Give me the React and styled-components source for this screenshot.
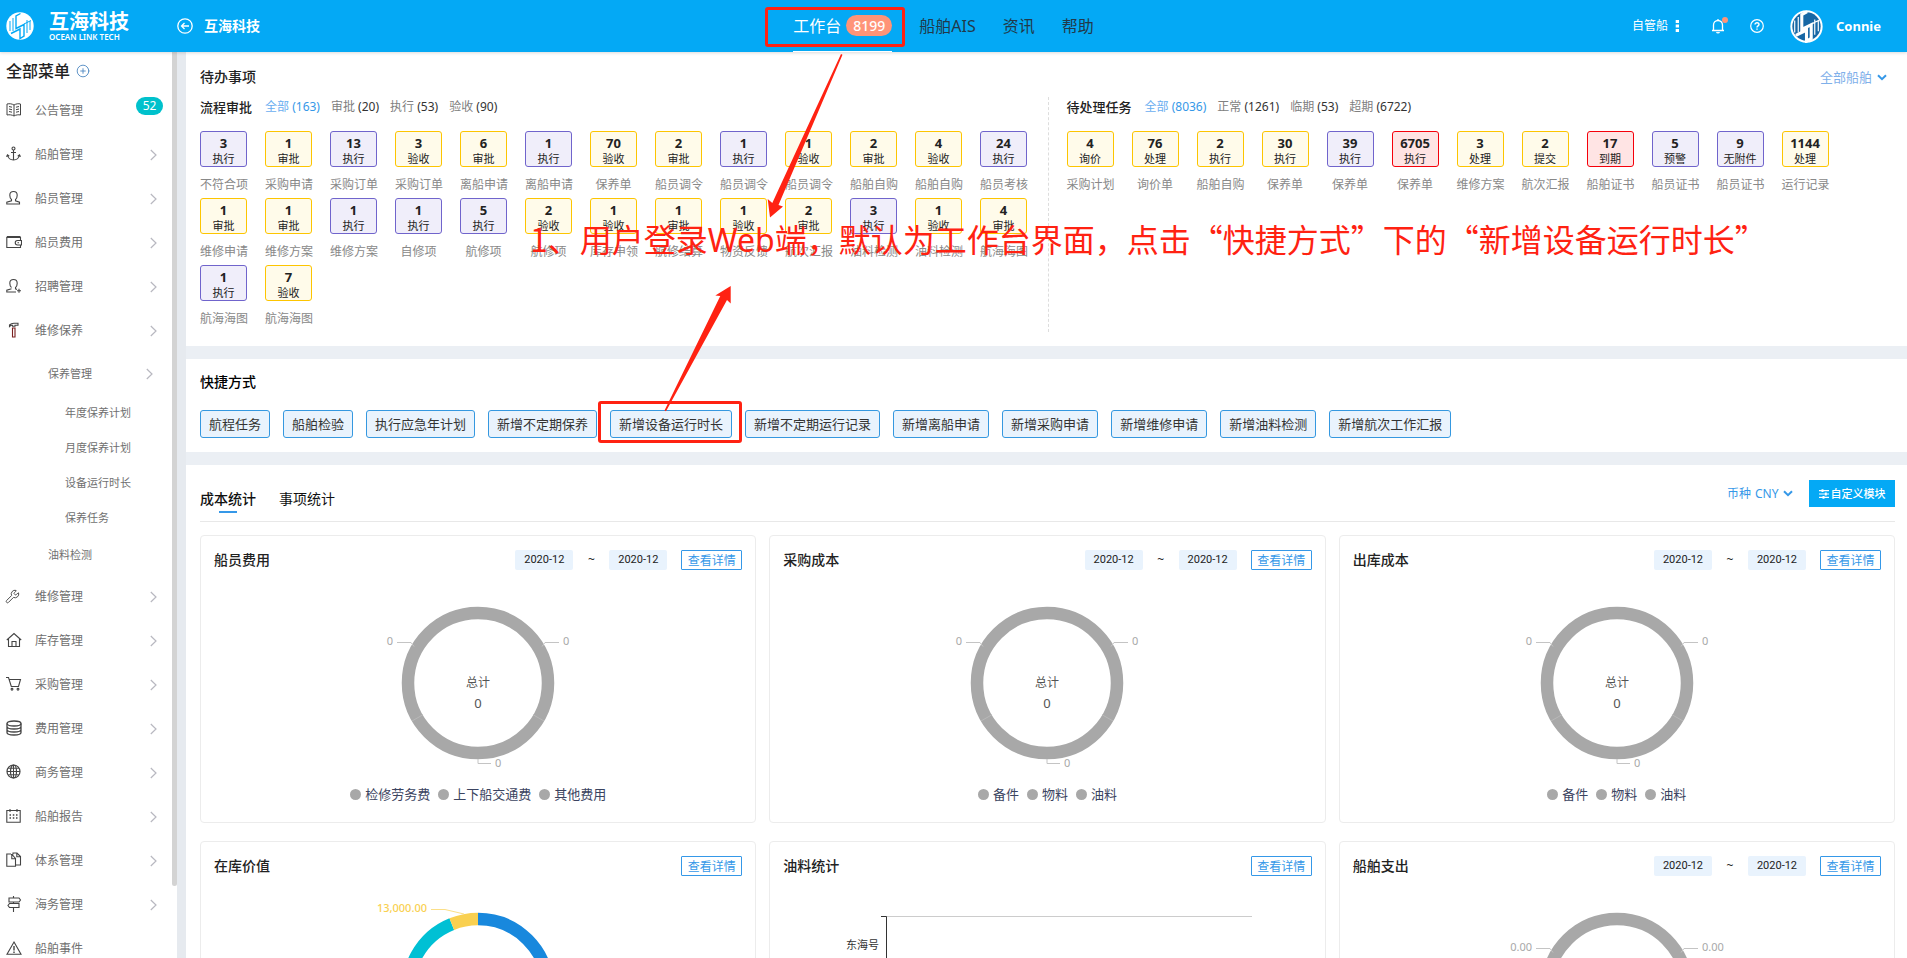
import React from "react";
import styled, { createGlobalStyle, css } from "styled-components";
import { CirclePlus, Globe, Wrench } from "lucide-react";

const GlobalStyle = createGlobalStyle`
  *, *::before, *::after { box-sizing: border-box; }
  body {
    margin: 0;
    overflow: hidden;
    background: #ebeff4;
    color: #222;
    font: 12px/20px "Noto Sans", "Noto Sans CJK SC", sans-serif;
  }
  button, input, select { font: inherit; color: inherit; margin: 0; }
  button { cursor: pointer; }
  a { color: inherit; text-decoration: none; }
  h1, h2, h3, p, ul { margin: 0; padding: 0; font-size: inherit; font-weight: inherit; }
  ul { list-style: none; }
`;

const RED = "#ff2212";

/* ---------- shell ---------- */

const Shell = styled.div`
  position: relative;
  display: flex;
  flex-direction: column;
  height: 100vh;
  overflow: hidden;
`;

const Body = styled.div`
  display: flex;
  flex: 1;
  min-height: 0;
`;

/* ---------- header ---------- */

const Header = styled.header`
  position: relative;
  z-index: 1;
  display: flex;
  flex: none;
  height: 52px;
  background: #04a9f5;
  color: #fff;
  box-shadow: 0 1px 3px rgba(0, 0, 0, 0.15);
`;

const HeaderSide = styled.div`
  display: flex;
  flex: 1;
  align-items: center;
  justify-content: ${(p) => (p.$end ? "flex-end" : "flex-start")};
  padding: ${(p) => (p.$end ? "0 26px 0 0" : "0 0 0 6px")};
`;

const Brand = styled.a`
  display: flex;
  align-items: center;
  gap: 15px;
  width: 171px;
`;

const BrandText = styled.span`
  display: flex;
  flex-direction: column;
`;

const BrandName = styled.strong`
  font-size: 20px;
  line-height: 22px;
`;

const BrandTag = styled.span`
  font-size: 8px;
  line-height: 8px;
  font-weight: 600;
  white-space: nowrap;
`;

const Company = styled.a`
  display: flex;
  align-items: center;
  gap: 11px;
  font-size: 14px;
  font-weight: 700;
`;

const Nav = styled.nav`
  display: flex;
  gap: 27px;
  font-size: 16px;
`;

const NavLink = styled.a`
  position: relative;
  display: flex;
  align-items: center;
  gap: 5px;
  color: ${(p) => (p.$active ? "#fff" : "#21394a")};
  border-bottom: 1px solid ${(p) => (p.$active ? "#fff" : "transparent")};
`;

const NavCount = styled.span`
  height: 21px;
  padding: 0 7px;
  border-radius: 11px;
  background: #ff9478;
  font-size: 14px;
  line-height: 21px;
  font-weight: 500;
`;

const Highlight = styled.span`
  position: absolute;
  inset: ${(p) => p.$inset};
  border: 3px solid ${RED};
  border-radius: 3px;
  pointer-events: none;
`;

const FleetButton = styled.button`
  display: flex;
  align-items: center;
  gap: 7px;
  padding: 0;
  border: 0;
  background: none;
  color: #fff;
`;

const IconButton = styled.button`
  display: flex;
  padding: 0;
  margin-left: ${(p) => p.$space}px;
  border: 0;
  background: none;
  color: #fff;
`;

const UserLink = styled.a`
  display: flex;
  align-items: center;
  gap: 13px;
  margin-left: 26px;
  font-size: 13px;
  font-weight: 700;
`;

/* ---------- sidebar ---------- */

const Sidebar = styled.aside`
  display: flex;
  flex: none;
  width: 186px;
  background: #e6eaef;
`;

const MenuPane = styled.div`
  flex: 1;
  padding-top: 9px;
  overflow: hidden;
  background: #fff;
`;

const MenuTitle = styled.h2`
  display: flex;
  align-items: center;
  gap: 6px;
  height: 20px;
  margin-bottom: 8px;
  padding-left: 6px;
  font-size: 16px;
  font-weight: 500;
  color: #222;
`;

const ScrollTrack = styled.div`
  width: 5px;
  margin-right: 9px;
  background: #fff;
`;

const ScrollThumb = styled.div`
  height: 92%;
  border-radius: 0 0 3px 3px;
  background: #d3d3d3;
`;

const menuLevels = {
  top: css`height: 44px; padding-left: 6px; font-size: 12px;`,
  sub: css`height: 42px; padding-left: 48px; padding-right: 19px; font-size: 11px;`,
  leaf: css`height: 35px; padding-left: 65px; font-size: 11px;`,
  last: css`height: 40px; padding-left: 48px; font-size: 11px;`,
};

const MenuLink = styled.a`
  display: flex;
  align-items: center;
  padding-right: 15px;
  color: #707070;
  ${(p) => menuLevels[p.$level]}
`;

const MenuIcon = styled.span`
  display: flex;
  width: 29px;
  padding-bottom: 2px;
  color: #444;
`;

const MenuLabel = styled.span`
  flex: 1;
`;

const MenuBadge = styled.span`
  align-self: flex-start;
  width: 27px;
  height: 18px;
  margin: 8px -6px 0 0;
  border-radius: 9px;
  background: #00c1cc;
  color: #fff;
  line-height: 18px;
  text-align: center;
`;

/* ---------- main ---------- */

const Main = styled.main`
  display: flex;
  flex: 1;
  flex-direction: column;
  gap: 13px;
  min-width: 0;
`;

const Panel = styled.section`
  flex: none;
  padding: ${(p) => p.$pad};
  background: #fff;
`;

const PanelHead = styled.div`
  display: flex;
  align-items: center;
  justify-content: space-between;
  padding-right: 8px;
`;

const Heading = styled.h2`
  font-size: 14px;
  font-weight: 500;
  color: ${(p) => (p.$dark ? "#000" : "#222")};
`;

const SelectWrap = styled.label`
  display: flex;
  align-items: center;
  gap: 4px;
  color: ${(p) => p.$color};
  font-size: ${(p) => p.$size}px;

  svg { color: #3598e8; }
`;

const Select = styled.select`
  appearance: none;
  padding: 0;
  border: 0;
  background: none;
`;

const TodoColumns = styled.div`
  display: grid;
  grid-template-columns: 1fr 1fr;
  margin-top: 10px;
`;

const TodoColumn = styled.div`
  min-height: 234px;
  padding-left: ${(p) => (p.$second ? 18 : 0)}px;
  border-left: ${(p) => (p.$second ? "1px dashed #ddd" : "0")};
`;

const FilterRow = styled.div`
  display: flex;
  align-items: center;
  gap: 11px;
  margin-bottom: 14px;
`;

const FilterTitle = styled.h3`
  margin-right: 2px;
  font-size: 13px;
  font-weight: 500;
`;

const Filter = styled.button`
  padding: 0;
  border: 0;
  background: none;
  color: ${(p) => (p.$active ? "#6aaef0" : "#808080")};

  span { color: ${(p) => (p.$active ? "#3598e8" : "#333")}; }
`;

const TaskGrid = styled.ul`
  display: grid;
  grid-template-columns: repeat(auto-fill, 47px);
  column-gap: 18px;
`;

const TaskItem = styled.li`
  height: 67px;
  text-align: center;
  white-space: nowrap;
  color: #888;
`;

const tones = {
  y: ["#fdc500", "#fffbea"],
  p: ["#7064cc", "#f0eefa"],
  r: ["#f5000a", "#ffe4e4"],
};

const TaskBox = styled.button`
  display: block;
  width: 47px;
  height: 36px;
  margin-bottom: 8px;
  padding: 3px 0 0;
  border: 1px solid ${(p) => tones[p.$tone][0]};
  border-radius: 3px;
  background: ${(p) => tones[p.$tone][1]};
  color: #222;
  font-size: 11px;
  line-height: 15px;

  strong {
    display: block;
    font-size: 13px;
    line-height: 16px;
  }
`;

const ShortcutRow = styled.div`
  display: flex;
  flex-wrap: wrap;
  gap: 13px;
  margin-top: 18px;
`;

const Shortcut = styled.button`
  position: relative;
  height: 28px;
  padding: 0 8px;
  border: 1px solid #3598e0;
  border-radius: 3px;
  background: #e9f3fd;
  color: #333;
  font-size: 13px;
  line-height: 26px;
`;

const StatsHead = styled.div`
  display: flex;
  align-items: center;
  justify-content: space-between;
  height: 42px;
  margin-bottom: 13px;
  border-bottom: 1px solid #e8e8e8;
`;

const Tabs = styled.div`
  display: flex;
  gap: 23px;
`;

const Tab = styled.button`
  display: flex;
  flex-direction: column;
  align-items: center;
  padding: 0;
  border: 0;
  background: none;
  color: #111;
  font-size: 14px;
  font-weight: ${(p) => (p.$active ? 500 : 400)};

  &::after {
    width: 18px;
    height: 2px;
    margin-top: 2px;
    background: ${(p) => (p.$active ? "#3598e8" : "transparent")};
    content: "";
  }
`;

const StatsTools = styled.div`
  display: flex;
  align-items: center;
  gap: 16px;
  padding-bottom: 14px;
`;

const CustomizeButton = styled.button`
  display: flex;
  align-items: center;
  justify-content: center;
  gap: 2px;
  width: 86px;
  height: 27px;
  padding: 0;
  border: 0;
  background: #04a9f5;
  color: #fff;
  font-size: 11px;
  font-weight: 500;
`;

const CardGrid = styled.div`
  display: grid;
  grid-template-columns: repeat(3, 1fr);
  gap: 18px 13px;
`;

const Card = styled.article`
  height: 288px;
  padding: 14px 13px 0;
  border: 1px solid #ececec;
  border-radius: 4px;
`;

const CardHead = styled.div`
  display: flex;
  align-items: center;
  height: 20px;
  margin-bottom: 30px;

  h3 { flex: 1; font-size: 14px; font-weight: 500; }
`;

const DateInput = styled.input`
  width: 58px;
  height: 20px;
  padding: 0;
  border: 0;
  border-radius: 2px;
  background: #e9f3fd;
  color: #222;
  font: 11px/20px Roboto, "Noto Sans", sans-serif;
  text-align: center;
`;

const Tilde = styled.span`
  width: 36px;
  text-align: center;
`;

const DetailLink = styled.a`
  width: 61px;
  height: 20px;
  margin-left: 14px;
  border: 1px solid #3598e8;
  border-radius: 1px;
  color: #3598e8;
  line-height: 20px;
  text-align: center;
`;

const Chart = styled.svg`
  display: block;
  margin: 0 auto;
  overflow: visible;
  font-size: 11px;
`;

const Legend = styled.ul`
  display: flex;
  justify-content: center;
  gap: 8px;
  margin-top: 14px;
  color: #3b4460;
  font-size: 13px;

  li { display: flex; align-items: center; gap: 4px; }
  li::before {
    width: 11px;
    height: 11px;
    border-radius: 50%;
    background: #a8a8a8;
    content: "";
  }
`;

/* ---------- annotation ---------- */

const Annotation = styled.div`
  position: absolute;
  inset: 0;
  z-index: 2;
  pointer-events: none;
`;

const Arrows = styled.svg`
  position: absolute;
  top: 0;
  left: 0;
`;

const Note = styled.p`
  position: absolute;
  top: 214px;
  left: 530px;
  color: ${RED};
  font: 32px/48px "Noto Sans CJK SC", sans-serif;
  white-space: nowrap;

  span { font-family: "Noto Sans", sans-serif; }
`;

/* ---------- drawings ---------- */

const Line = ({ children, width = 1.1 }) => (
  <svg width="16" height="16" viewBox="0 0 16 16" fill="none" stroke="currentColor" strokeWidth={width}>
    {children}
  </svg>
);

const icons = {
  book: (
    <Line width={1}>
      <path d="M8 3C6 1.8 3.5 1.4 1 2v11c2.5-.5 5-.2 7 1 2-1.200 4.500-1.500 6.500-1V2C12.500 1.400 10 1.800 8 3zM8 3v11" />
      <path d="M3 4.500l3 .7M3 7l3 .7M3 9.500l3 .7M13 4.500l-3 .7M13 7l-3 .7M13 9.500l-3 .7" />
    </Line>
  ),
  anchor: (
    <Line>
      <circle cx="7.500" cy="2.500" r="1.500" />
      <path d="M7.500 4v10M5 6.500h5M1.500 9c.6 3 3 5 6 5s5.400-2 6-5M.5 10.800l1-2 1.800 1.300M14.500 10.800l-1-2-1.800 1.300" />
    </Line>
  ),
  user: (
    <Line>
      <path d="M5.500 9.500C4.300 8.500 3.800 7 3.800 5.200 3.800 2.900 5.200 1.500 7.500 1.500s3.700 1.400 3.700 3.700c0 1.800-.5 3.300-1.700 4.300v1.300l4 1.400v1.800H.8v-1.800l4.700-1.400z" />
    </Line>
  ),
  wallet: (
    <Line>
      <path d="M.8 3.500h13.700v10H.8z" />
      <path d="M.8 3h13.700" strokeWidth="2" />
      <path d="M15.500 6.500h-4a2 2 0 0 0 0 4.500h4z" fill="#fff" />
      <path d="M11.500 8.800h1.500" />
    </Line>
  ),
  recruit: (
    <Line>
      <path d="M5.500 9.500C4.300 8.500 3.800 7 3.800 5.200 3.800 2.900 5.200 1.500 7.500 1.500s3.700 1.400 3.700 3.700c0 1.800-.5 3.300-1.700 4.300v1.300l1.500.6M10 14H.8v-1.800l4.700-1.400M11 12.700h4M13 10.700v4" />
    </Line>
  ),
  hammer: (
    <Line>
      <path d="M3.500 4.500V3C5 1.500 6 1.300 8 1.300h4v2H9v1H6.500v-1C5.500 3 4.500 3.500 3.500 4.500z" />
      <path d="M6.500 6h2.500v9H6.500z" stroke="#7a2020" />
    </Line>
  ),
  wrench: <Wrench size={15} strokeWidth={1.5} transform="translate(-1 0)" />,
  home: (
    <Line>
      <path d="M.8 8L8 1.500 15.200 8M2.500 7v7.500h11V7M6 14.500V9.500h4v5" />
    </Line>
  ),
  cart: (
    <Line>
      <path d="M0 1.500h2.500l2.800 9h7.200l2-7H3.200" />
      <circle cx="6" cy="13.200" r=".9" />
      <circle cx="12" cy="13.200" r=".9" />
    </Line>
  ),
  coins: (
    <Line width={1.3}>
      <ellipse cx="8" cy="3.500" rx="7" ry="2.500" />
      <path d="M1 3.500v9C1 13.900 4.100 15 8 15s7-1.100 7-2.500v-9M1 6.500C1 7.900 4.100 9 8 9s7-1.100 7-2.500M1 9.500C1 10.900 4.100 12 8 12s7-1.100 7-2.500" />
    </Line>
  ),
  globe: (
    <Line width={1.2}>
      <circle cx="7.500" cy="7.500" r="6.500" />
      <ellipse cx="7.500" cy="7.500" rx="3" ry="6.500" />
      <path d="M7.500 1v13M1 7.500h13M2.200 4.200h10.600M2.200 10.800h10.600" strokeWidth="1" />
    </Line>
  ),
  calendar: (
    <Line>
      <path d="M.8 2.500h13.400v11.700H.8zM4 1v3M11 1v3" />
      <path d="M3.500 7h1.500M6.800 7h1.500M10 7h1.500M3.500 10h1.500M6.800 10h1.500M10 10h1.500" strokeWidth="1.500" />
    </Line>
  ),
  docs: (
    <Line>
      <path d="M5 2H.8v12.200h8.700V6.500L6 2.500H5M5.800 2.500v4.200h3.700M7 2.500V1h4l3.500 3.500v8.500H9.500M10.800 1v3.700h3.700" />
    </Line>
  ),
  sign: (
    <Line>
      <path d="M7.500 0v2M7.500 6v1.500M7.500 11.500V16M3 2h10l1.500 2L13 6H3zM13 7.500H3.500L2 9.500l1.500 2H13z" />
    </Line>
  ),
  alert: (
    <Line>
      <path d="M8 2L15 14.200H1z" />
      <path d="M8 6v4.500M8 11.500V13" strokeWidth="1.400" />
    </Line>
  ),
};

const MenuArrow = () => (
  <svg width="7" height="12" viewBox="0 0 7 12" fill="none" stroke="#b8b8c0" strokeWidth="1.200">
    <path d="M.8 1L6 6 .8 11" />
  </svg>
);

const DownArrow = () => (
  <svg width="10" height="7" viewBox="0 0 10 7" fill="none" stroke="currentColor" strokeWidth="2">
    <path d="M1 1.200l4 4 4-4" />
  </svg>
);

const LogoMark = ({ size, disc, ink, rim }) => (
  <svg width={size} height={size} viewBox="0 0 28 28">
    <circle cx="14" cy="14" r="13.700" fill={disc} />
    {rim && <circle cx="14" cy="14" r="12" fill={rim} />}
    <path d="M14.500 1.500L10 4v12.500l8-4V24l-4 2.500V17l-9 4.500" fill="none" stroke={ink} strokeWidth={rim ? 2.6 : 1.4} />
    <path d="M7 6v13M4 9v10M21 8v13M24 9v9M18 12l7-3.500" fill="none" stroke={ink} strokeWidth="1" />
  </svg>
);

const BackIcon = () => (
  <svg width="16" height="16" viewBox="0 0 16 16" fill="none" stroke="#fff" strokeWidth="1.300">
    <circle cx="8" cy="8" r="7.200" />
    <path d="M12 8H4.500M7.500 5l-3 3 3 3" />
  </svg>
);

const BellIcon = () => (
  <svg width="18" height="18" viewBox="0 0 18 18" fill="none" stroke="#fff" strokeWidth="1.300">
    <path d="M2 13.500h12M3.500 13.500V8a4.500 4.500 0 0 1 9 0v5.500M8 3.500V2M6.500 15.200c.6 1 2.400 1 3 0" />
    <circle cx="15" cy="3" r="3" fill="#ff9478" stroke="none" />
  </svg>
);

const HelpIcon = () => (
  <svg width="14" height="14" viewBox="0 0 14 14" fill="none" stroke="#fff" strokeWidth="1.200">
    <circle cx="7" cy="7" r="6.300" />
    <path d="M5 5.600c0-2.600 4-2.400 4-.1 0 1.300-2 1.500-2 3M7 9.600v1.200" strokeWidth="1.400" />
  </svg>
);

const DotsIcon = () => (
  <svg width="5" height="14" viewBox="0 0 5 14" fill="#fff">
    <path d="M.7 1h3.300v3H.7zM.7 5.500h3.300v3H.7zM.7 10h3.300v3H.7z" />
  </svg>
);

const SlidersIcon = () => (
  <svg width="10" height="10" viewBox="0 0 10 10" stroke="#fff" strokeWidth="1.200">
    <path d="M0 1.700h10M0 5h10M0 8.300h10" />
    <path d="M3.500.3v2.800M6.800 3.600v2.800M4.500 6.900v2.800" strokeWidth="2" />
  </svg>
);

const EmptyDonut = ({ value, total }) => (
  <Chart width="220" height="170" viewBox="0 0 220 170">
    <circle cx="110" cy="83" r="70" fill="none" stroke="#a8a8a8" strokeWidth="12.500" />
    <path d="M44 121l11-6.300M176 121l-11-6.300" stroke="#b8b8b8" />
    <path d="M29 42.500h14l3 4M191 42.500h-14l-3 4M110 159v4.500h13" fill="none" stroke="#c4c4c4" />
    <g fill="#a8a8a8">
      <text x="25" y="45" textAnchor="end">{value}</text>
      <text x="195" y="45">{value}</text>
      <text x="127" y="167">{value}</text>
    </g>
    <g fill="#555" textAnchor="middle">
      <text x="110" y="87" fontSize="12">总计</text>
      <text x="110" y="108" fontSize="13">{total}</text>
    </g>
  </Chart>
);

const StockDonut = () => (
  <Chart width="220" height="170" viewBox="0 0 220 170" fill="none">
    <g strokeWidth="12.500">
      <path d="M110 13a70 70 0 0 1 0 140" stroke="#1888dd" />
      <path d="M110 153A70 70 0 0 1 83.800 18.100" stroke="#00c0d4" />
      <path d="M83.800 18.100A70 70 0 0 1 110 13" stroke="#f9d050" />
    </g>
    <path d="M63 3.500h14l19 4.500" stroke="#fbdf88" />
    <text x="59" y="6" textAnchor="end" fill="#f9d050" fontWeight="500">13,000.00</text>
  </Chart>
);

const FuelChart = () => (
  <Chart width="420" height="170" viewBox="0 0 420 170" fill="none">
    <path d="M49 10.500h366" stroke="#ccc" />
    <path d="M44 10.500h5.500V170" stroke="#333" />
    <text x="42" y="43" textAnchor="end" fill="#333">东海号</text>
  </Chart>
);

/* ---------- data ---------- */

const menu = [
  ["book", "公告管理", "52"],
  ["anchor", "船舶管理"],
  ["user", "船员管理"],
  ["wallet", "船员费用"],
  ["recruit", "招聘管理"],
  ["hammer", "维修保养"],
  ["wrench", "维修管理"],
  ["home", "库存管理"],
  ["cart", "采购管理"],
  ["coins", "费用管理"],
  ["globe", "商务管理"],
  ["calendar", "船舶报告"],
  ["docs", "体系管理"],
  ["sign", "海务管理"],
  ["alert", "船舶事件"],
];

const leaves = ["年度保养计划", "月度保养计划", "设备运行时长", "保养任务"];

const approvals = [
  [3, "执行", "不符合项", "p"], [1, "审批", "采购申请", "y"], [13, "执行", "采购订单", "p"],
  [3, "验收", "采购订单", "y"], [6, "审批", "离船申请", "y"], [1, "执行", "离船申请", "p"],
  [70, "验收", "保养单", "y"], [2, "审批", "船员调令", "y"], [1, "执行", "船员调令", "p"],
  [1, "验收", "船员调令", "y"], [2, "审批", "船舶自购", "y"], [4, "验收", "船舶自购", "y"],
  [24, "执行", "船员考核", "p"], [1, "审批", "维修申请", "y"], [1, "审批", "维修方案", "y"],
  [1, "执行", "维修方案", "p"], [1, "执行", "自修项", "p"], [5, "执行", "航修项", "p"],
  [2, "验收", "航修项", "y"], [1, "验收", "库存申领", "y"], [1, "审批", "航修结算", "y"],
  [1, "验收", "物资反馈", "y"], [2, "审批", "航次汇报", "y"], [3, "执行", "油料检测", "p"],
  [1, "验收", "油料检测", "y"], [4, "审批", "航海海图", "y"], [1, "执行", "航海海图", "p"],
  [7, "验收", "航海海图", "y"],
];

const pending = [
  [4, "询价", "采购计划", "y"], [76, "处理", "询价单", "y"], [2, "执行", "船舶自购", "y"],
  [30, "执行", "保养单", "y"], [39, "执行", "保养单", "p"], [6705, "执行", "保养单", "r"],
  [3, "处理", "维修方案", "y"], [2, "提交", "航次汇报", "y"], [17, "到期", "船舶证书", "r"],
  [5, "预警", "船员证书", "p"], [9, "无附件", "船员证书", "p"], [1144, "处理", "运行记录", "y"],
];

const shortcuts = [
  "航程任务", "船舶检验", "执行应急年计划", "新增不定期保养", "新增设备运行时长", "新增不定期运行记录",
  "新增离船申请", "新增采购申请", "新增维修申请", "新增油料检测", "新增航次工作汇报",
];

const supplies = ["备件", "物料", "油料"];

const cards = [
  { title: "船员费用", dates: true, chart: <EmptyDonut value="0" total="0" />, legend: ["检修劳务费", "上下船交通费", "其他费用"] },
  { title: "采购成本", dates: true, chart: <EmptyDonut value="0" total="0" />, legend: supplies },
  { title: "出库成本", dates: true, chart: <EmptyDonut value="0" total="0" />, legend: supplies },
  { title: "在库价值", chart: <StockDonut /> },
  { title: "油料统计", chart: <FuelChart /> },
  { title: "船舶支出", dates: true, chart: <EmptyDonut value="0.00" /> },
];

/* ---------- parts ---------- */

function TaskColumn({ title, filters, tasks, second }) {
  return (
    <TodoColumn $second={second}>
      <FilterRow>
        <FilterTitle>{title}</FilterTitle>
        {filters.map(([name, count], i) => (
          <Filter key={name} $active={i === 0}>
            {name} <span>({count})</span>
          </Filter>
        ))}
      </FilterRow>
      <TaskGrid>
        {tasks.map(([count, action, name, tone], i) => (
          <TaskItem key={i}>
            <TaskBox $tone={tone}>
              <strong>{count}</strong>
              {action}
            </TaskBox>
            {name}
          </TaskItem>
        ))}
      </TaskGrid>
    </TodoColumn>
  );
}

function MenuSection() {
  return (
    <nav>
      {menu.map(([icon, label, badge]) => (
        <React.Fragment key={label}>
          <MenuLink href="#" $level="top">
            <MenuIcon>{icons[icon]}</MenuIcon>
            <MenuLabel>{label}</MenuLabel>
            {badge ? <MenuBadge>{badge}</MenuBadge> : icon !== "alert" && <MenuArrow />}
          </MenuLink>
          {icon === "hammer" && (
            <>
              <MenuLink href="#" $level="sub">
                <MenuLabel>保养管理</MenuLabel>
                <MenuArrow />
              </MenuLink>
              {leaves.map((leaf) => (
                <MenuLink key={leaf} href="#" $level="leaf">{leaf}</MenuLink>
              ))}
              <MenuLink href="#" $level="last">油料检测</MenuLink>
            </>
          )}
        </React.Fragment>
      ))}
    </nav>
  );
}

export default function App() {
  return (
    <Shell>
      <GlobalStyle />
      <Header>
        <HeaderSide>
          <Brand href="#">
            <LogoMark size={28} disc="#fff" ink="#04a9f5" />
            <BrandText>
              <BrandName>互海科技</BrandName>
              <BrandTag>OCEAN LINK TECH</BrandTag>
            </BrandText>
          </Brand>
          <Company href="#">
            <BackIcon />
            互海科技
          </Company>
        </HeaderSide>
        <Nav>
          <NavLink href="#" $active>
            工作台
            <NavCount>8199</NavCount>
            <Highlight $inset="7px -13px 4px -28px" />
          </NavLink>
          <NavLink href="#">船舶AIS</NavLink>
          <NavLink href="#">资讯</NavLink>
          <NavLink href="#">帮助</NavLink>
        </Nav>
        <HeaderSide $end>
          <FleetButton>
            自管船
            <DotsIcon />
          </FleetButton>
          <IconButton $space={30} aria-label="通知">
            <BellIcon />
          </IconButton>
          <IconButton $space={22} aria-label="帮助">
            <HelpIcon />
          </IconButton>
          <UserLink href="#">
            <LogoMark size={33} disc="#fff" rim="#1767a5" ink="#fff" />
            Connie
          </UserLink>
        </HeaderSide>
      </Header>

      <Body>
        <Sidebar>
          <MenuPane>
            <MenuTitle>
              全部菜单
              <CirclePlus size={14} strokeWidth={1.5} color="#4a86c0" />
            </MenuTitle>
            <MenuSection />
          </MenuPane>
          <ScrollTrack>
            <ScrollThumb />
          </ScrollTrack>
        </Sidebar>

        <Main>
          <Panel $pad="15px 12px 14px 14px">
            <PanelHead>
              <Heading>待办事项</Heading>
              <SelectWrap $color="#7fb0ea" $size={13}>
                <Select aria-label="船舶">
                  <option>全部船舶</option>
                </Select>
                <DownArrow />
              </SelectWrap>
            </PanelHead>
            <TodoColumns>
              <TaskColumn
                title="流程审批"
                filters={[["全部", 163], ["审批", 20], ["执行", 53], ["验收", 90]]}
                tasks={approvals}
              />
              <TaskColumn
                second
                title="待处理任务"
                filters={[["全部", 8036], ["正常", 1261], ["临期", 53], ["超期", 6722]]}
                tasks={pending}
              />
            </TodoColumns>
          </Panel>

          <Panel $pad="13px 12px 14px 14px">
            <Heading $dark>快捷方式</Heading>
            <ShortcutRow>
              {shortcuts.map((name) => (
                <Shortcut key={name}>
                  {name}
                  {name === "新增设备运行时长" && <Highlight $inset="-10px -11px -6px -13px" />}
                </Shortcut>
              ))}
            </ShortcutRow>
          </Panel>

          <Panel $pad="15px 12px 14px 14px">
            <StatsHead>
              <Tabs>
                <Tab $active>成本统计</Tab>
                <Tab>事项统计</Tab>
              </Tabs>
              <StatsTools>
                <SelectWrap $color="#3598e8" $size={12}>
                  币种
                  <Select>
                    <option>CNY</option>
                  </Select>
                  <DownArrow />
                </SelectWrap>
                <CustomizeButton>
                  <SlidersIcon />
                  自定义模块
                </CustomizeButton>
              </StatsTools>
            </StatsHead>
            <CardGrid>
              {cards.map(({ title, dates, chart, legend }) => (
                <Card key={title}>
                  <CardHead>
                    <h3>{title}</h3>
                    {dates && (
                      <>
                        <DateInput aria-label={title + " 开始月份"} defaultValue="2020-12" />
                        <Tilde>~</Tilde>
                        <DateInput aria-label={title + " 结束月份"} defaultValue="2020-12" />
                      </>
                    )}
                    <DetailLink href="#">查看详情</DetailLink>
                  </CardHead>
                  {chart}
                  {legend && (
                    <Legend>
                      {legend.map((item) => (
                        <li key={item}>{item}</li>
                      ))}
                    </Legend>
                  )}
                </Card>
              ))}
            </CardGrid>
          </Panel>
        </Main>
      </Body>

      <Annotation>
        <Arrows width="1000" height="450" fill={RED}>
          <path d="M841 54l1.500.8L778.500 205l4.500 1.500L770 217.500l-2.300-18.500 4.600 4z" />
          <path d="M664.500 410.500l1.500.8L727 300l3.700 3.500V286l-15.400 9.500 5 .5z" />
        </Arrows>
        <Note>
          1、用户登录<span>Web</span>端，默认为工作台界面，点击“快捷方式”下的“新增设备运行时长”
        </Note>
      </Annotation>
    </Shell>
  );
}
